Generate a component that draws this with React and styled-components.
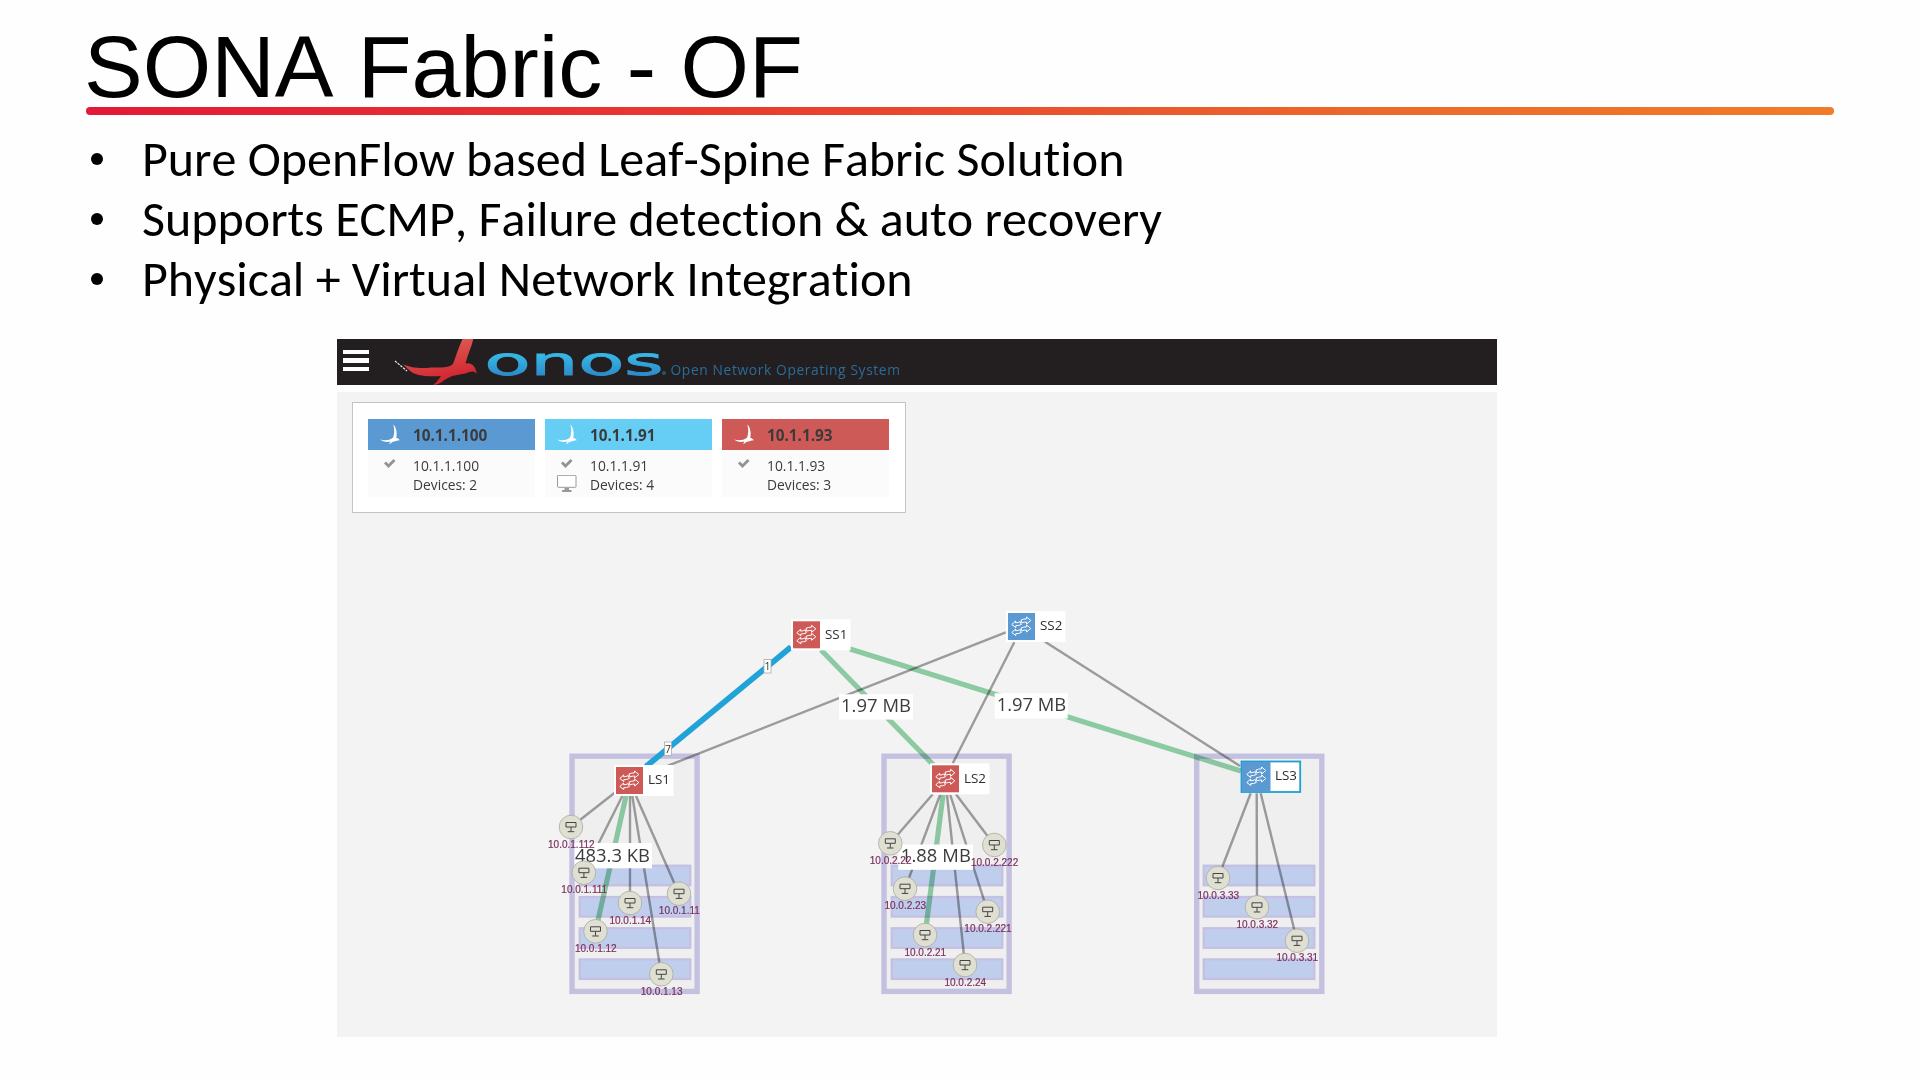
import styled, { createGlobalStyle } from 'styled-components';

const GlobalStyle = createGlobalStyle`
  * {
    box-sizing: border-box;
  }

  body {
    margin: 0;
    background: #fefefe;
    overflow: hidden;
  }
`;

const Slide = styled.main`
  display: flex;
  flex-direction: column;
  width: 1920px;
  height: 1080px;
  padding: 16px 86px 0;
  background: #fefefe;
`;

const Title = styled.h1`
  margin: 0 0 0 -2px;
  height: 91px;
  font: 400 88px/101px 'Liberation Sans', Arial, sans-serif;
  font-kerning: none;
  color: #000;
  white-space: nowrap;
`;

const Rule = styled.div`
  height: 8px;
  width: 1748px;
  border-radius: 4px;
  background: linear-gradient(to right, #e31937, #e8392f 35%, #ec6a2b 75%, #f07c28);
`;

const Bullets = styled.ul`
  display: flex;
  flex-direction: column;
  list-style: none;
  margin: 0;
  padding: 14px 0 0;
  height: 224px;
`;

const Bullet = styled.li`
  display: flex;
  align-items: center;
  height: 60px;
  font: 400 50px/60px Carlito, Calibri, Lato, sans-serif;
  font-variant-ligatures: none;
  font-kerning: none;
  color: #000;
  white-space: nowrap;

  &::before {
    content: '';
    flex: none;
    width: 12px;
    height: 12px;
    margin: 0 39px 0 5px;
    border-radius: 50%;
    background: #000;
  }
`;

const Console = styled.section`
  width: 1160px;
  margin-left: 251px;
  font-family: 'Open Sans', sans-serif;
`;

const Masthead = styled.header`
  display: flex;
  align-items: center;
  height: 46px;
  margin-bottom: 7px;
  padding-left: 6px;
  background: #231f20;
`;

const Burger = styled.div`
  display: flex;
  flex-direction: column;
  gap: 4px;
  width: 26px;
  margin: 0 21px 3px 0;

  span {
    height: 4.4px;
    background: #fff;
  }
`;

const Stage = styled.div`
  display: grid;
  height: 645px;
  background: #f3f3f3;

  > * {
    grid-area: 1 / 1;
  }
`;

const Instances = styled.div`
  display: flex;
  gap: 10px;
  width: 554px;
  height: 111px;
  margin: 10px 0 0 15px;
  padding: 16px 15px;
  background: #fff;
  border: 1px solid #c4c4c4;
`;

const InstanceCard = styled.article`
  width: 167px;
  height: 78px;
  background: #fbfbfb;
  color: #3c3a3a;
`;

const InstanceHead = styled.div`
  display: flex;
  align-items: center;
  height: 31px;
  background: ${props => props.$color};
  font-size: 15.3px;
  font-weight: 700;
  line-height: 31px;

  svg {
    flex: none;
    margin: 0 13px 0 12px;
  }

  span {
    padding-top: 2px;
  }
`;

const InstanceBody = styled.div`
  display: grid;
  grid-template-columns: 45px 1fr;
  grid-auto-rows: 19px;
  padding-top: 6px;
  font-size: 13.8px;
  line-height: 19px;
  white-space: nowrap;

  svg {
    display: block;
    margin-left: 11px;
  }
`;

const Map = styled.svg`
  display: block;
  width: 1160px;
  height: 645px;
`;

const Link = styled.line`
  stroke: #a3a3a3;
  stroke-width: 2.4;
  mix-blend-mode: multiply;
`;

const TrafficLink = styled(Link)`
  stroke: #93d4aa;
  stroke-width: 5.2;
`;

const SelectedLink = styled(Link)`
  stroke: #22a3d8;
  stroke-width: 5.8;
  mix-blend-mode: normal;
`;

const DeviceName = styled.text`
  font: 13.4px 'Open Sans', sans-serif;
  fill: #2c2c2c;
`;

const HostName = styled.text`
  font: 10px 'Liberation Sans', Arial, sans-serif;
  fill: #7c3060;
  stroke: #7c3060;
  stroke-width: 0.2;
  text-anchor: middle;
`;

const TrafficText = styled.text`
  font: 18.4px 'Open Sans', sans-serif;
  fill: #3c3c3c;
`;

const PortText = styled.text`
  font: 10.5px 'Open Sans', sans-serif;
  fill: #333;
  text-anchor: middle;
`;

const RED = '#cd5a57';
const BLUE = '#5b99d2';

const instances = [
  { ip: '10.1.1.100', devices: 2, color: BLUE },
  { ip: '10.1.1.91', devices: 4, color: '#66cdf5', ui: true },
  { ip: '10.1.1.93', devices: 3, color: RED },
];

const racks = [
  { x: 569.3, inset: 10.4 },
  { x: 881.3, inset: 10.4 },
  { x: 1194, inset: 9.7 },
];
const slots = [864.7, 896, 927.2, 958.4];

const devices = [
  { name: 'SS1', x: 793, y: 621.3, color: RED },
  { name: 'SS2', x: 1008, y: 613, color: BLUE },
  { name: 'LS1', x: 616, y: 767, color: RED },
  { name: 'LS2', x: 932, y: 765.3, color: RED },
  { name: 'LS3', x: 1243, y: 763, color: BLUE, selected: true },
];

// sx / sy is where the link leaves the leaf switch
const hosts = [
  { ip: '10.0.1.112', x: 571, y: 827, sx: 614.7, sy: 792.7 },
  { ip: '10.0.1.111', x: 583.9, y: 872.7, sx: 622.3, sy: 796 },
  { ip: '10.0.1.12', x: 595.5, y: 931.3, sx: 626, sy: 796, traffic: true },
  { ip: '10.0.1.14', x: 630, y: 903, sx: 630, sy: 796 },
  { ip: '10.0.1.13', x: 661.3, y: 974.3, sx: 632.3, sy: 796 },
  { ip: '10.0.1.11', x: 679, y: 893.7, sx: 636, sy: 796 },
  { ip: '10.0.2.22', x: 890.3, y: 843.3, sx: 932.7, sy: 794.3 },
  { ip: '10.0.2.23', x: 905, y: 888.7, sx: 940, sy: 795 },
  { ip: '10.0.2.21', x: 925, y: 935, sx: 943, sy: 795, traffic: true },
  { ip: '10.0.2.24', x: 965, y: 965, sx: 947, sy: 795 },
  { ip: '10.0.2.221', x: 987.7, y: 911.7, sx: 950.3, sy: 795 },
  { ip: '10.0.2.222', x: 994.3, y: 845, sx: 956, sy: 794.3 },
  { ip: '10.0.3.33', x: 1218, y: 878, sx: 1250.7, sy: 793.3 },
  { ip: '10.0.3.32', x: 1257, y: 907.3, sx: 1256.7, sy: 793.3 },
  { ip: '10.0.3.31', x: 1297, y: 940.7, sx: 1260.7, sy: 793.3 },
];

const traffic = [
  { text: '1.97 MB', x: 839, y: 694.3, w: 74, tx: 2, len: 70 },
  { text: '1.97 MB', x: 994.7, y: 693.3, w: 73, tx: 2, len: 69.5 },
  { text: '483.3 KB', x: 574.5, y: 843, w: 77.5, tx: 0.5, len: 75, ty: 19 },
  { text: '1.88 MB', x: 898.3, y: 844.5, w: 74.7, tx: 2.5, len: 70 },
];

function MastheadLogo() {
  return (
    <svg width='520' height='46' viewBox='390 339 520 46'>
      <defs>
        <linearGradient id='bird' x1='0' y1='0' x2='0.3' y2='1'>
          <stop offset='0' stopColor='#dd6a5c' />
          <stop offset='1' stopColor='#d2232f' />
        </linearGradient>
        <linearGradient id='word' x1='0' y1='0.35' x2='0' y2='0.85'>
          <stop offset='0' stopColor='#35b6e4' />
          <stop offset='1' stopColor='#2c86c7' />
        </linearGradient>
      </defs>
      <path
        fill='url(#bird)'
        d='M463 338 L473.5 338 C472 346 467.500 355 465.500 363.500 C470 362.800 473.500 365 475 368 L477 373.500 C474 371 472 371 469 372 C463 375 456 374 450 377 C443 380 440 385 433 385 C437 382 439 379 441 376 C429 377 414 376 409 370 L402.500 363.700 C411 368.500 423 368.500 431 367.500 C440 367.500 449 368 453 364 C456 356 459 346 463 338 Z'
      />
      <path d='M395 361 L407 371' stroke='#e9e9e9' strokeWidth='1.2' strokeDasharray='2.500 1' fill='none' />
      <text
        x='484.500'
        y='374.800'
        fontFamily='DejaVu Sans, sans-serif'
        fontSize='37'
        textLength='179'
        lengthAdjust='spacingAndGlyphs'
        fill='url(#word)'
        stroke='url(#word)'
        strokeWidth='0.900'
      >
        onos
      </text>
      <circle cx='664' cy='373' r='1.300' fill='none' stroke='#2c86c7' strokeWidth='0.800' />
      <text x='670.500' y='375' fontFamily='Open Sans, sans-serif' fontSize='13.800' textLength='229.500' fill='#2a6c9a'>
        Open Network Operating System
      </text>
    </svg>
  );
}

function BirdIcon() {
  return (
    <svg width='20' height='22' viewBox='0 0 20 22'>
      <path
        fill='#fff'
        d='M13.300 0.500 C16 3 17.400 8 16.300 14 C17.500 13.700 18.700 14.800 20 16.300 C17.500 16 16.500 17.300 14 17.500 C11.500 17.800 10.500 20 9 20.300 L10.500 17.600 C6.500 18.300 3 18 0 15.500 C5 16.800 9.500 16.300 13 13.700 C14.800 9.500 14.500 5 13.300 0.500 Z'
      />
    </svg>
  );
}

function CheckIcon() {
  return (
    <svg width='22' height='19' viewBox='0 0 22 19'>
      <path d='M6 6.500 L9.500 10 L15.500 4' fill='none' stroke='#929292' strokeWidth='2.800' />
    </svg>
  );
}

function MonitorIcon() {
  return (
    <svg width='22' height='19' viewBox='0 0 22 19'>
      <rect x='1.500' y='0.300' width='18.500' height='12' rx='0.800' fill='#fff' stroke='#999' />
      <path d='M8.500 13 h4.500 v2 h2.500 v2 h-9.500 v-2 h2.500 Z' fill='#999' />
    </svg>
  );
}

function Instance({ ip, devices, color, ui }) {
  return (
    <InstanceCard>
      <InstanceHead $color={color}>
        <BirdIcon />
        <span>{ip}</span>
      </InstanceHead>
      <InstanceBody>
        <CheckIcon />
        <div>{ip}</div>
        {ui ? <MonitorIcon /> : <span />}
        <div>Devices: {devices}</div>
      </InstanceBody>
    </InstanceCard>
  );
}

function Rack({ x, inset }) {
  return (
    <g>
      <rect x={x + 2.7} y='756.200' width='125.100' height='235.200' fill='#efefef' stroke='#c4c1e0' strokeWidth='5.400' />
      {slots.map(y => (
        <rect key={y} x={x + inset} y={y + 1} width='110.600' height='19.600' fill='#c0ceee' stroke='#c5bfe2' strokeWidth='2.200' />
      ))}
    </g>
  );
}

function Device({ name, x, y, color, selected }) {
  return (
    <g transform={`translate(${x} ${y})`}>
      <rect x='-2' y='-2' width='59.500' height='31' fill='#fff' />
      {selected ? (
        <>
          <rect x='-1.500' y='-1.500' width='58.700' height='30.500' fill='#fff' stroke='#1f9fd2' strokeWidth='1.800' />
          <rect x='-1' y='-1' width='28.500' height='29.500' fill={color} />
        </>
      ) : (
        <rect width='27' height='27' fill={color} />
      )}
      <g fill='none' stroke='#fff' strokeWidth='1' strokeLinejoin='round'>
        {[0, 8].map(dy => (
          <g key={dy} transform={`translate(0 ${dy})`}>
            <path d='M3.800 11.500 L7.600 8 V9.800 C9.500 9.800 10.800 9.200 12.300 8.600 L13.300 11.600 C11.500 12.300 9.800 12.700 7.800 12.700 V14.500 Z' />
            <path d='M22.800 7.500 L18.600 4 V5.800 C16.500 5.900 14.800 6.300 13 7 L13.800 9.800 C15.500 9.300 17 9 18.600 9 V11 Z' />
          </g>
        ))}
      </g>
      <DeviceName x='32' y='17.300'>{name}</DeviceName>
    </g>
  );
}

function Host({ ip, x, y }) {
  return (
    <g transform={`translate(${x} ${y})`}>
      <circle r='11.800' fill='#e0e0d2' stroke='#a9a9a0' strokeWidth='0.800' />
      <path d='M-5 -4.500 H5 V0 H-5 Z M0 0 V4.500 M-3.300 4.700 H3.300' fill='none' stroke='#444' strokeWidth='1' />
      <HostName x='0.300' y='20.500'>{ip}</HostName>
    </g>
  );
}

function Port({ x, y, number }) {
  return (
    <g transform={`translate(${x} ${y})`}>
      <rect x='0.500' y='0.500' width='7' height='13.500' fill='#fff' stroke='#aaa' strokeWidth='0.800' />
      <PortText x='4' y='11'>{number}</PortText>
    </g>
  );
}

function Topology() {
  return (
    <Map viewBox='337 392 1160 645'>
      {racks.map(r => <Rack key={r.x} {...r} />)}

      <SelectedLink x1='791' y1='647' x2='646' y2='766.500' />
      <TrafficLink x1='821' y1='650' x2='933.500' y2='765' />
      <TrafficLink x1='850' y1='649' x2='1241' y2='771' />
      <Link x1='1005.700' y1='632.300' x2='668' y2='765.700' />
      <Link x1='1014.300' y1='642.300' x2='952.700' y2='763.500' />
      <Link x1='1045' y1='641.700' x2='1240' y2='766' />
      {hosts.map(({ ip, x, y, sx, sy, traffic }) => {
        const Line = traffic ? TrafficLink : Link;
        return <Line key={ip} x1={sx} y1={sy} x2={x} y2={y} />;
      })}

      {traffic.map(({ text, x, y, w, tx, len, ty = 17.2 }) => (
        <g key={x} transform={`translate(${x} ${y})`}>
          <rect width={w} height='25.300' fill='#fff' />
          <TrafficText x={tx} y={ty} textLength={len}>{text}</TrafficText>
        </g>
      ))}

      <Port x={763.5} y={659} number='1' />
      <Port x={664} y={741.500} number='7' />

      {devices.map(d => <Device key={d.name} {...d} />)}
      {hosts.map(h => <Host key={h.ip} {...h} />)}
    </Map>
  );
}

export default function App() {
  return (
    <Slide>
      <GlobalStyle />
      <Title>SONA Fabric - OF</Title>
      <Rule />
      <Bullets>
        <Bullet>Pure OpenFlow based Leaf-Spine Fabric Solution</Bullet>
        <Bullet>Supports ECMP, Failure detection &amp; auto recovery</Bullet>
        <Bullet>Physical + Virtual Network Integration</Bullet>
      </Bullets>
      <Console>
        <Masthead>
          <Burger>
            <span />
            <span />
            <span />
          </Burger>
          <MastheadLogo />
        </Masthead>
        <Stage>
          <Topology />
          <Instances>
            {instances.map(i => <Instance key={i.ip} {...i} />)}
          </Instances>
        </Stage>
      </Console>
    </Slide>
  );
}
